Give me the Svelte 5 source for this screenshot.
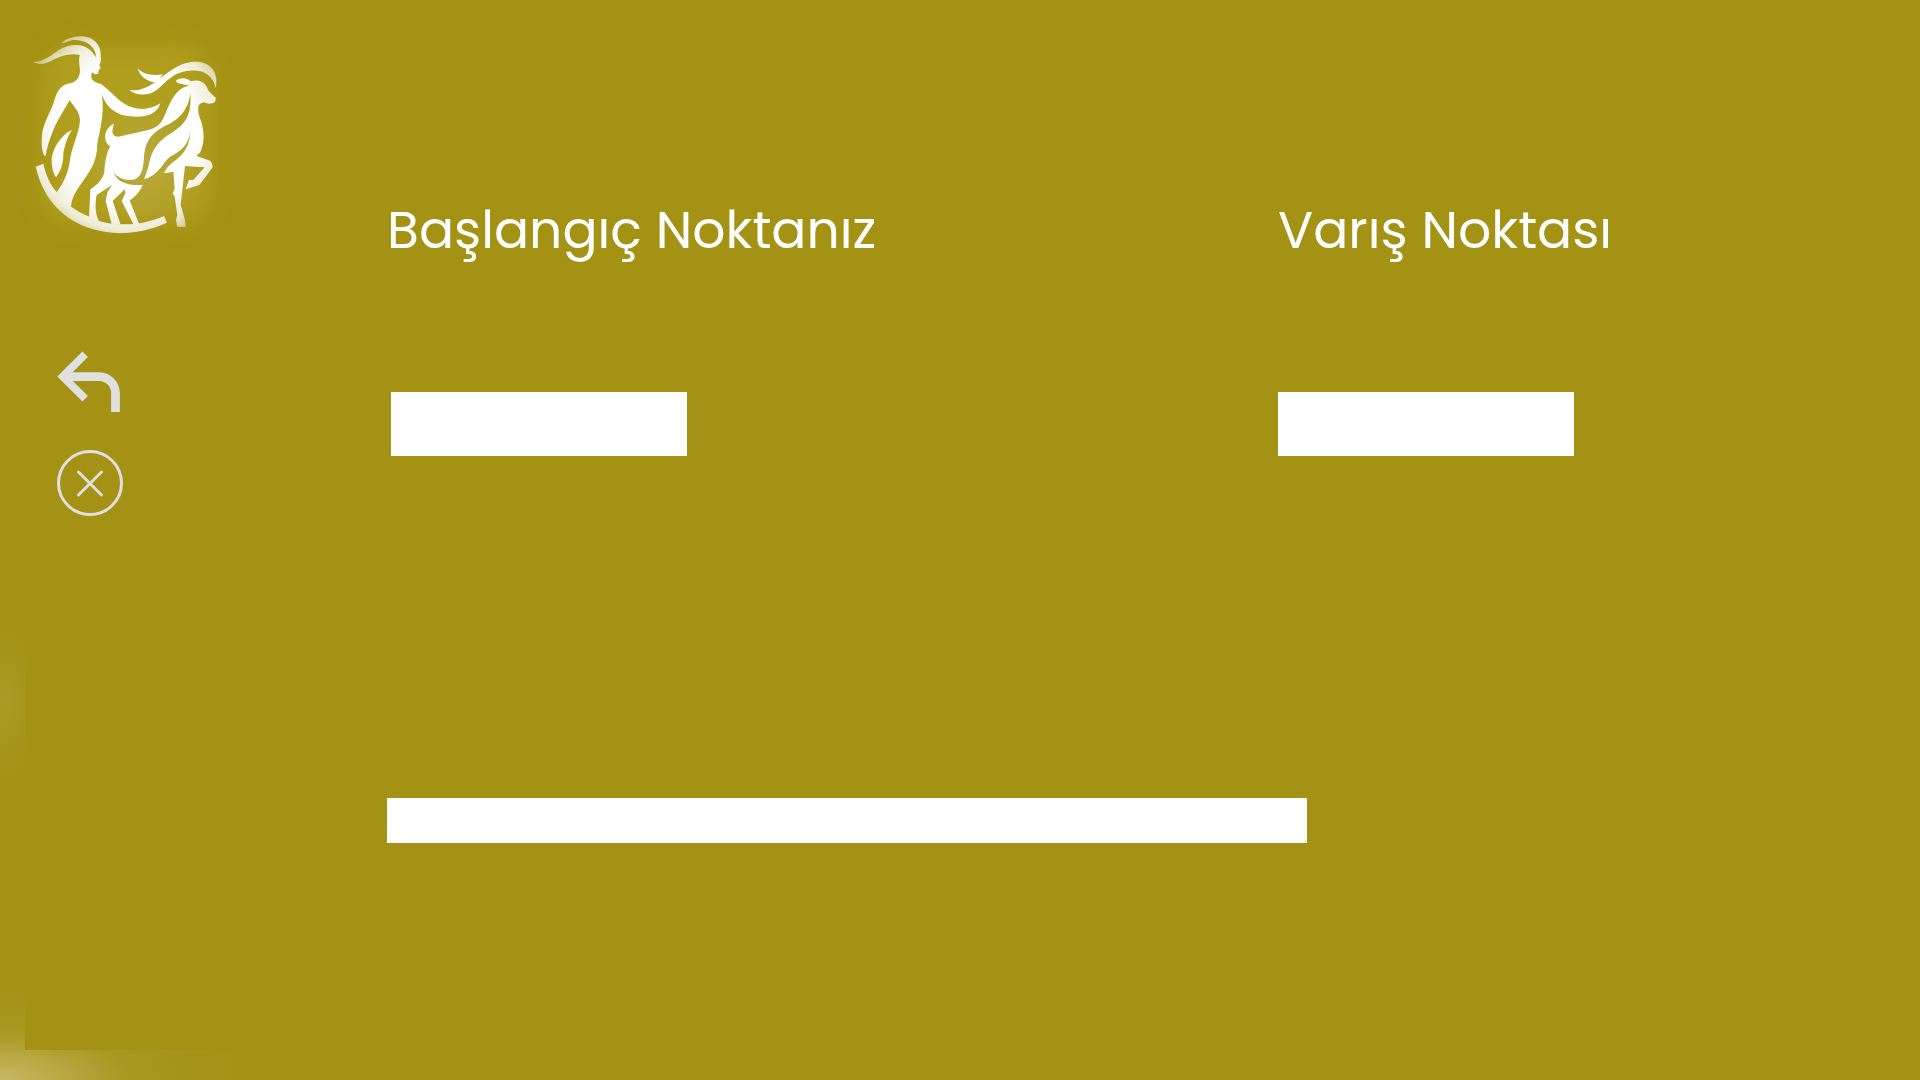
<script>
  let start = $state('');
  let destination = $state('');
  let route = $state('');
</script>

<div class="page">
  <div class="panel">
    <aside>
      <svg class="logo" viewBox="0 0 660 690" role="img" aria-label="Logo">
        <defs>
          <filter id="soft" x="-20%" y="-20%" width="140%" height="140%">
            <feGaussianBlur stdDeviation="32" />
          </filter>
          <radialGradient id="shade" gradientUnits="userSpaceOnUse" cx="370" cy="430" r="200">
            <stop offset="0" stop-color="#b9aa40" />
            <stop offset="1" stop-color="#b9aa40" stop-opacity="0" />
          </radialGradient>
          <radialGradient id="ink" gradientUnits="userSpaceOnUse" cx="320" cy="340" r="340">
            <stop offset="0" stop-color="#fff" />
            <stop offset="0.62" stop-color="#fff" />
            <stop offset="0.85" stop-color="#efecd8" />
            <stop offset="1" stop-color="#cfc78a" />
          </radialGradient>
        </defs>
        <rect x="70" y="80" width="500" height="530" rx="90" fill="#b09f1a" filter="url(#soft)" />
        <circle cx="370" cy="430" r="200" fill="url(#shade)" />
        <g fill="url(#ink)">
          <path d="M38 126C95 125 105 78 165 75C200 74 215 92 228 112C228 85 205 60 165 60C148 60 138 68 124 70C140 52 180 42 210 54C240 68 245 95 242 125L238 134L242 145L236 150L235 160C228 165 222 162 216 157C208 178 222 188 243 192C270 210 290 240 325 258C360 272 390 270 421 250C412 280 385 290 350 290C295 290 262 270 245 222C255 275 240 330 232 370C232 420 215 445 195 475C170 510 155 530 153 562L158 580L110 516C130 490 145 460 150 420C155 380 178 340 180 300C178 270 158 258 149 240C130 275 115 295 100 330C88 360 80 385 77 408C65 405 62 370 68 330C80 290 95 270 105 235C115 205 130 192 150 190C175 185 180 165 180 150C178 130 175 115 180 105C155 98 120 108 95 122C75 133 55 134 38 126Z" />
          <path d="M156 330C130 340 98 380 95 420C95 445 100 460 108 472C128 445 130 420 130 400C135 370 145 345 156 330Z" />
          <path d="M47 440L70 431C78 465 90 495 110 516L155 562C180 578 190 583 208 590C240 608 275 613 310 613C360 614 400 602 432 588L441 608C360 645 280 646 220 628C130 600 70 540 47 440Z" />
          <path d="M328 210C365 214 380 200 405 188C375 182 358 165 353 145C370 165 400 168 428 163L421 174C455 150 480 125 530 125C575 127 597 160 587 205C580 165 550 148 510 152C460 155 440 185 410 210C385 228 350 228 328 210Z" />
          <path d="M282 311C274 335 275 350 295 350L385 330C430 318 430 290 445 260C460 225 480 200 508 197L485 192C475 190 468 188 468 182C480 173 500 172 512 184C530 178 550 182 560 200C565 215 578 224 588 234L585 246C576 253 562 252 552 247C530 250 532 270 540 295C552 325 555 360 545 385C542 400 535 400 530 408L570 422C576 428 578 434 578 442L538 495L497 508L507 480L520 480L554 442L495 438L482 555L495 600L497 620L472 620L468 600L472 585L464 530L458 520L464 505L460 455L432 460C437 448 445 438 455 430C480 410 510 390 511 330C508 370 490 390 450 410C430 425 415 468 372 477C376 470 379 460 385 440C395 400 400 370 460 335C500 310 515 280 511 220C505 275 470 305 430 320C385 345 375 375 372 410C370 440 368 465 345 478C320 485 295 475 280 457C295 490 325 497 368 495C360 515 345 530 329 542L358 613L341 614L305 543L316 520L314 508L278 543L302 614L275 612L257 543L263 515L276 495L230 525C225 550 224 585 240 607L207 592L211 508C235 492 250 475 253 455C255 430 258 400 271 379C265 375 258 370 256 358C252 340 262 320 282 311Z" />
        </g>
      </svg>
      <nav aria-label="Gezinme">
        <button type="button" aria-label="Geri">
          <svg viewBox="0 0 66 66" aria-hidden="true">
            <g fill="none" stroke="#e0e0e0">
              <path d="M28.200 4.200L5.800 26.500L28.200 48.800" stroke-width="7.800" />
              <path d="M8 26.700H42A16.500 16.500 0 0 1 58.500 43.200V62" stroke-width="8.700" />
            </g>
          </svg>
        </button>
        <button type="button" aria-label="Kapat">
          <svg viewBox="0 0 66 66" aria-hidden="true">
            <g fill="none" stroke="#e0e0e0" stroke-width="3">
              <circle cx="33" cy="33" r="31.500" />
              <path d="M21.500 22L44.500 45M44.500 22L21.500 45" stroke-linecap="round" />
            </g>
          </svg>
        </button>
      </nav>
    </aside>

    <main>
      <div class="labels">
        <label for="start">Başlangıç Noktanız</label>
        <label for="destination">Varış Noktası</label>
      </div>
      <div class="inputs">
        <input id="start" type="text" bind:value={start} />
        <input id="destination" type="text" bind:value={destination} />
      </div>
      <input class="route" type="text" aria-label="Rota" bind:value={route} />
    </main>
  </div>
</div>

<style>
  :global(body) {
    margin: 0;
    background: #a49214;
  }

  .page {
    box-sizing: border-box;
    display: flex;
    min-height: 100vh;
    padding: 0 0 30px 25px;
    font-family: Poppins, Inter, sans-serif;
    background:
      radial-gradient(ellipse 260px 100px at 0 100%, #c6b963, rgba(173, 157, 44, 0.5) 50%, rgba(164, 146, 20, 0)),
      radial-gradient(ellipse 44px 84px at 0 702px, #a99b25, rgba(164, 146, 20, 0)),
      #a49214;
  }

  .panel {
    flex: 1;
    display: grid;
    grid-template-columns: 362px 1fr;
    background: #a49214;
  }

  aside {
    display: flex;
    flex-direction: column;
    align-items: flex-start;
    gap: 100px;
    padding-top: 20px;
  }

  .logo {
    width: 220px;
    height: 230px;
    margin-left: -5px;
  }

  nav {
    display: flex;
    flex-direction: column;
    gap: 34px;
    padding-left: 32px;
  }

  button {
    width: 66px;
    height: 66px;
    padding: 0;
    border: 0;
    background: none;
    cursor: pointer;
  }

  button svg {
    display: block;
    width: 100%;
    height: 100%;
  }

  main {
    padding-top: 192px;
  }

  .labels {
    display: grid;
    grid-template-columns: 891fr 642fr;
  }

  .inputs {
    display: grid;
    grid-template-columns: 887fr 642fr;
    margin-top: 124px;
    padding-left: 4px;
  }

  label {
    color: #fff;
    font-size: 52px;
    line-height: 76px;
    white-space: nowrap;
  }

  input {
    box-sizing: border-box;
    width: 296px;
    height: 64px;
    padding: 0 12px;
    border: 0;
    border-radius: 0;
    background: #fff;
    color: #333;
    font: inherit;
    font-size: 24px;
  }

  .route {
    display: block;
    width: 60%;
    height: 45px;
    margin-top: 342px;
  }
</style>
